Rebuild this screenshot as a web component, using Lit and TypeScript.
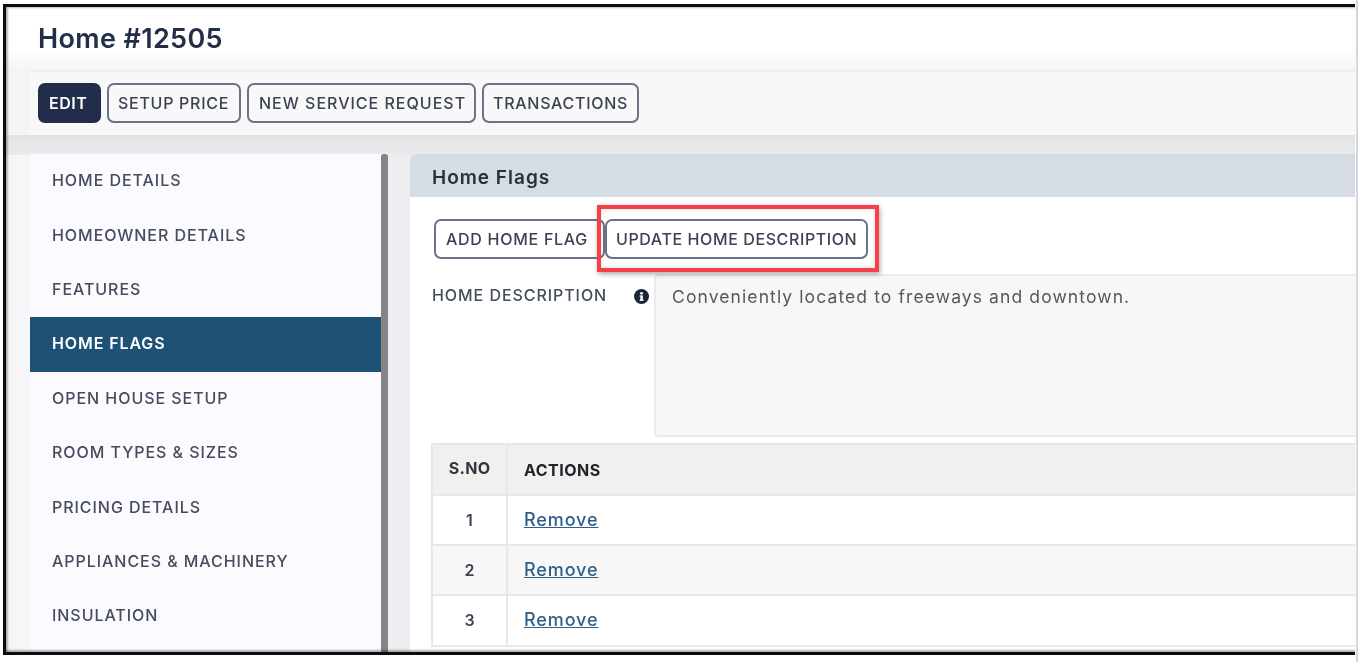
import { LitElement, html, css } from "lit";
import { customElement } from "lit/decorators.js";

const NAV = ["HOME DETAILS", "HOMEOWNER DETAILS", "FEATURES", "HOME FLAGS", "OPEN HOUSE SETUP", "ROOM TYPES & SIZES", "PRICING DETAILS", "APPLIANCES & MACHINERY", "INSULATION"];

@customElement("app-root")
export class AppRoot extends LitElement {
  static styles = css`
    :host { display: block; width: 1358px; height: 662px; background: #fff; overflow: hidden; font-family: Inter, "Noto Sans", sans-serif; }
    * { box-sizing: border-box; }
    .outer { height: 662px; padding: 4px 0 7px 3px; border-right: 2px solid #d3d6dc; }
    .frame { position: relative; height: 651px; width: 1352px; border: solid #0c0c0c; border-width: 3px 0 3px 3px; background: #f5f5f7; overflow: hidden; display: flex; flex-direction: column; filter: blur(0.45px); }
    .frame::after { content: ""; position: absolute; inset: 0; pointer-events: none; box-shadow: inset 3px 2px 2px -1px rgba(0,0,0,.28), inset 0 -3px 2px -1px rgba(0,0,0,.3); }
    .page-head { height: 63px; flex: none; background: linear-gradient(#fff 65%, #f5f5f5); padding: 15px 0 0 32px; font-size: 27px; line-height: 34px; font-weight: 600; color: #232f47; letter-spacing: 0.35px; }
    .toolbar { height: 65px; flex: none; margin-left: 24px; background: #f8f8f8; border-top: 2px solid #eee; padding: 11px 0 0 8px; display: flex; gap: 6px; }
    .btn { height: 40px; border: 2px solid #6b7288; border-radius: 7px; background: transparent; display: inline-flex; align-items: center; justify-content: flex-start; padding: 0 0 0 9px; font: 500 16px Inter, sans-serif; letter-spacing: 0.72px; color: #3b4256; white-space: nowrap; overflow: visible; }
    .btn.primary { background: #212d4a; border-color: #212d4a; color: #fff; font-weight: 600; letter-spacing: 0.5px; }
    .w-edit { width: 63px; } .w-price { width: 134px; } .w-req { width: 229px; padding-left: 10px; letter-spacing: 1px; } .w-tx { width: 157px; }
    .w-add { width: 171px; padding-left: 10px; } .w-upd { width: 263px; letter-spacing: 0.6px; }
    .body { flex: 1; min-height: 0; display: flex; padding: 19px 0 0 24px; background: linear-gradient(#e3e3e5, #ebebed) top / 100% 20px no-repeat, linear-gradient(90deg, #f6f6f9 24px, #eeeef2 24px); }
    .side { width: 359px; flex: none; display: flex; }
    .nav { width: 351px; background: #fafaff; }
    .nav-item { height: 54.4px; display: flex; align-items: center; padding: 0 0 2px 22px; font-size: 16px; font-weight: 500; letter-spacing: 0.95px; color: #454c5e; white-space: nowrap; }
    .nav-item.active { background: #1d5175; color: #fff; font-weight: 600; letter-spacing: 0.9px; }
    .scroll { width: 7px; background: #858585; border-radius: 3px 3px 0 0; }
    .panel { margin-left: 21px; flex: 1; min-width: 0; background: #fff; border-radius: 6px 0 0 0; overflow: hidden; }
    .panel-head { height: 43px; background: #d5dce3; padding: 3px 0 0 22px; display: flex; align-items: center; font-size: 19px; font-weight: 600; color: #2a2f3a; letter-spacing: 1px; }
    .panel-body { padding: 22px 0 0 22px; }
    .actions { display: flex; padding-left: 2px; }
    .update-wrap { position: relative; }
    .highlight { position: absolute; left: -8px; top: -14px; right: -11px; bottom: -13px; border: 4px solid #f63f47; box-shadow: 1px 2px 5px rgba(0,0,0,.35), inset 0 0 5px rgba(0,0,0,.15); pointer-events: none; }
    .desc { display: flex; margin-top: 15px; }
    .desc-label { width: 222px; flex: none; display: flex; justify-content: space-between; align-items: flex-start; padding: 13px 5px 0 0; font-size: 16px; font-weight: 500; letter-spacing: 0.94px; color: #454c5e; line-height: 17px; white-space: nowrap; }
    .info { width: 15px; height: 15px; margin-top: 2px; flex: none; }
    .desc-box { flex: 1; height: 163px; background: #f7f7f7; border: 2px solid #ebebeb; border-right: 0; border-radius: 4px 0 0 4px; padding: 11px 0 0 16px; font-size: 17.5px; line-height: 20px; letter-spacing: 1.1px; color: #53585f; white-space: nowrap; }
    table { margin: 6px 0 0 -1px; width: 924px; border-collapse: collapse; table-layout: fixed; }
    th, td { border: 2px solid #e8e8e8; padding: 0; height: 50.2px; }
    th { background: #f1f0ef; height: 51px; font-size: 16px; font-weight: 700; letter-spacing: 0.5px; color: #20242c; }
    td { padding-bottom: 1px; }
    th.col1 { padding-bottom: 3px; letter-spacing: 0.3px; color: #33363f; }
    td.num { text-align: center; font-size: 16px; font-weight: 600; color: #3d4356; }
    .col1 { width: 75px; text-align: center; }
    th.col2, td.col2 { padding-left: 16px; text-align: left; border-right: 0; }
    tr.even td { background: #f7f7f7; }
    a { font-size: 18px; font-weight: 500; letter-spacing: 0.9px; color: #2f5f88; text-decoration: underline; }
  `;

  render() {
    return html`
      <div class="outer">
        <div class="frame">
          <div class="page-head">Home #12505</div>
          <div class="toolbar">
            <button class="btn primary w-edit">EDIT</button>
            <button class="btn w-price">SETUP PRICE</button>
            <button class="btn w-req">NEW SERVICE REQUEST</button>
            <button class="btn w-tx">TRANSACTIONS</button>
          </div>
          <div class="body">
            <div class="side">
              <div class="nav">
                ${NAV.map((n) => html`<div class="nav-item ${n === "HOME FLAGS" ? "active" : ""}">${n}</div>`)}
              </div>
              <div class="scroll"></div>
            </div>
            <div class="panel">
              <div class="panel-head">Home Flags</div>
              <div class="panel-body">
                <div class="actions">
                  <button class="btn w-add">ADD HOME FLAG</button>
                  <div class="update-wrap">
                    <button class="btn w-upd">UPDATE HOME DESCRIPTION</button>
                    <div class="highlight"></div>
                  </div>
                </div>
                <div class="desc">
                  <div class="desc-label">
                    <span>HOME DESCRIPTION</span>
                    <svg class="info" viewBox="0 0 16 16"><circle cx="8" cy="8" r="8" fill="#1c2438"/><rect x="6.8" y="7" width="2.6" height="5.4" fill="#fff"/><rect x="6" y="11.2" width="4.2" height="1.4" fill="#fff"/><rect x="6" y="7" width="3" height="1.2" fill="#fff"/><circle cx="8" cy="4.6" r="1.5" fill="#fff"/></svg>
                  </div>
                  <div class="desc-box">Conveniently located to freeways and downtown.</div>
                </div>
                <table>
                  <thead><tr><th class="col1">S.NO</th><th class="col2">ACTIONS</th></tr></thead>
                  <tbody>
                    ${[1, 2, 3].map((i) => html`<tr class="${i === 2 ? "even" : ""}"><td class="num col1">${i}</td><td class="col2"><a href="#">Remove</a></td></tr>`)}
                  </tbody>
                </table>
              </div>
            </div>
          </div>
        </div>
      </div>
    `;
  }
}
